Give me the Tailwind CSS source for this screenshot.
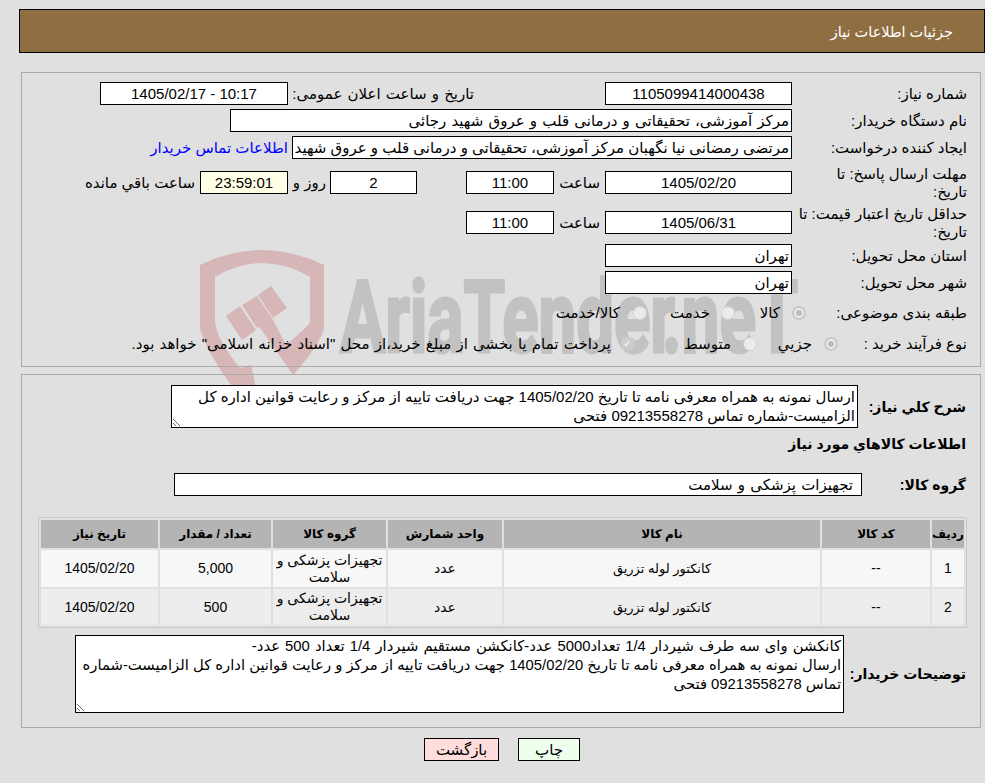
<!DOCTYPE html>
<html lang="fa" dir="rtl">
<head>
  <meta charset="UTF-8" />
  <title>جزئیات اطلاعات نیاز</title>
  <script src="https://cdn.jsdelivr.net/npm/@tailwindcss/browser@4"></script>
</head>
<body class="relative h-[783px] overflow-hidden bg-[#e0e0e0] text-[15px] leading-[18px] text-black font-['Liberation_Sans','DejaVu_Sans',sans-serif]">

  <!-- watermark -->
  <svg class="absolute left-0 top-0 [direction:ltr]" width="985" height="783" viewBox="0 0 985 783">
    <path d="M200 265 Q262 235 324 265 V328 Q320 345 293 375 L258 325 L272 318 L286 345 Q310 325 310 322 V277 Q262 249 215 277 V322 Q217 340 240 368 L251 365 L257 392 L236 392 Q205 350 200 328 Z" fill="#d6b6b6"/>
    <path d="M226 316 L240 306 L256 330 L242 340Z M242 305 L257 296 L272 318 L257 328Z M258 295 L271 286 L287 308 L273 318Z" fill="#d6b6b6"/>
    <g font-family="Roboto" font-weight="700" font-size="100" fill="#c2c2c2" stroke="#c2c2c2" stroke-width="3">
      <text x="340" y="352" textLength="335" lengthAdjust="spacingAndGlyphs">AriaTender</text>
      <text x="662" y="352" textLength="136" lengthAdjust="spacingAndGlyphs">.neT</text>
    </g>
  </svg>

  <div class="relative pl-[19px] pt-[9px]">
    <!-- header -->
    <div class="flex h-[44px] items-center border border-black bg-[#8f6f42] pr-[31px] pt-[2px] text-[14.5px] text-white">جزئیات اطلاعات نیاز</div>

    <!-- main details -->
    <div class="ml-[2px] mr-[4px] mt-[19px] h-[295px] border border-[#aaaaaa] pr-[13px] pt-[9px]">
      <div class="flex h-[23px] items-center">
        <div class="w-[175px] shrink-0 pl-[6px]">شماره نیاز:</div>
        <div class="flex h-[23px] w-[187px] items-center justify-center border border-black bg-white">1105099414000438</div>
        <div class="w-[317px] pr-[131px] whitespace-nowrap [word-spacing:1px]">تاریخ و ساعت اعلان عمومی:</div>
        <div class="flex h-[23px] w-[188px] items-center justify-center border border-black bg-white" dir="ltr">1405/02/17 - 10:17</div>
      </div>
      <div class="mt-[4px] flex h-[23px] items-center">
        <div class="w-[175px] shrink-0 pl-[6px]">نام دستگاه خریدار:</div>
        <div class="flex h-[23px] w-[562px] items-center border border-black bg-white px-[2px] [word-spacing:1px]">مرکز آموزشی، تحقیقاتی و درمانی قلب و عروق شهید رجائی</div>
      </div>
      <div class="mt-[4px] flex h-[23px] items-center">
        <div class="w-[175px] shrink-0 pl-[6px]">ایجاد کننده درخواست:</div>
        <div class="flex h-[23px] w-[500px] items-center overflow-hidden whitespace-nowrap border border-black bg-white px-[2px]">مرتضی رمضانی نیا نگهبان مرکز آموزشی، تحقیقاتی و درمانی قلب و عروق شهید رجائی</div>
        <a class="mr-[4px] whitespace-nowrap text-[#0000ff]">اطلاعات تماس خریدار</a>
      </div>
      <div class="mt-[6px] flex h-[35px] items-center">
        <div class="w-[175px] shrink-0">مهلت ارسال پاسخ: تا<br />تاریخ:</div>
        <div class="flex h-[23px] w-[187px] items-center justify-center border border-black bg-white">1405/02/20</div>
        <div class="w-[51px] pr-[5px]">ساعت</div>
        <div class="flex h-[23px] w-[88px] items-center justify-center border border-black bg-white">11:00</div>
        <div class="w-[49px]"></div>
        <div class="flex h-[23px] w-[87px] items-center justify-center border border-black bg-white">2</div>
        <div class="w-[42px] pr-[4px] whitespace-nowrap">روز و</div>
        <div class="flex h-[23px] w-[88px] items-center justify-center border border-black bg-[#ffffe6]">23:59:01</div>
        <div class="pr-[5px] whitespace-nowrap">ساعت باقي مانده</div>
      </div>
      <div class="mt-[5px] flex h-[35px] items-center">
        <div class="w-[175px] shrink-0">حداقل تاریخ اعتبار قیمت: تا<br />تاریخ:</div>
        <div class="flex h-[23px] w-[187px] items-center justify-center border border-black bg-white">1405/06/31</div>
        <div class="w-[51px] pr-[5px]">ساعت</div>
        <div class="flex h-[23px] w-[88px] items-center justify-center border border-black bg-white">11:00</div>
      </div>
      <div class="mt-[4px] flex h-[23px] items-center">
        <div class="w-[175px] shrink-0 pl-[6px]">استان محل تحویل:</div>
        <div class="flex h-[23px] w-[187px] items-center border border-black bg-white px-[2px]">تهران</div>
      </div>
      <div class="mt-[4px] flex h-[23px] items-center">
        <div class="w-[175px] shrink-0 pl-[6px]">شهر محل تحویل:</div>
        <div class="flex h-[23px] w-[187px] items-center border border-black bg-white px-[2px]">تهران</div>
      </div>
      <div class="mt-[7px] flex h-[23px] items-center">
        <div class="w-[161px] shrink-0">طبقه بندی موضوعی:</div>
        <span class="h-[14px] w-[14px] rounded-full border-2 border-[#c8c8c8] bg-[#ececec] p-[2px]"><span class="block h-full w-full rounded-full bg-[#bdbdbd]"></span></span>
        <div class="w-[57px] pr-[12px]">کالا</div>
        <span class="h-[14px] w-[14px] rounded-full border border-[#d0d0d0] bg-[#f0f0f0]/90"></span>
        <div class="w-[74px] pr-[11px]">خدمت</div>
        <span class="h-[14px] w-[14px] rounded-full border border-[#d0d0d0] bg-[#f0f0f0]/90"></span>
        <div class="pr-[13px] whitespace-nowrap">کالا/خدمت</div>
      </div>
      <div class="mt-[8px] flex h-[23px] items-center">
        <div class="w-[129px] shrink-0">نوع فرآیند خرید :</div>
        <span class="h-[14px] w-[14px] rounded-full border-2 border-[#c8c8c8] bg-[#ececec] p-[2px]"><span class="block h-full w-full rounded-full bg-[#bdbdbd]"></span></span>
        <div class="w-[67px] pr-[12px]">جزيي</div>
        <span class="h-[14px] w-[14px] rounded-full border border-[#d0d0d0] bg-[#f0f0f0]/90"></span>
        <div class="w-[109px] pr-[12px]">متوسط</div>
        <span class="flex h-[13px] w-[13px] items-center justify-center rounded-[2px] border border-[#cccccc] bg-[#d0d0d0]/80 text-[10px] leading-none text-white">✓</span>
        <div class="pr-[10px] whitespace-nowrap [word-spacing:1px]">پرداخت تمام یا بخشی از مبلغ خرید،از محل "اسناد خزانه اسلامی" خواهد بود.</div>
      </div>
    </div>

    <!-- goods -->
    <div class="ml-[2px] mr-[4px] mt-[7px] h-[354px] border border-[#aaaaaa] pr-[14px] pt-[10px]">
      <div class="flex h-[43px] items-center">
        <div class="w-[108px] shrink-0 text-[14px] font-bold">شرح کلي نیاز:</div>
        <div class="relative h-[43px] w-[687px] border border-black bg-white px-[2px] pt-px leading-[19px]">
          ارسال نمونه به همراه معرفی نامه تا تاریخ 1405/02/20 جهت دریافت تاییه از مرکز و رعایت قوانین اداره کل الزامیست-شماره تماس 09213558278 فتحی
          <svg class="absolute bottom-0 left-0" width="10" height="10" viewBox="0 0 10 10"><path d="M1 2 L8 9 M1 6 L4 9" stroke="#666666" stroke-width="1" fill="none"/></svg>
        </div>
      </div>
      <div class="mt-[7px] text-[14px] font-bold">اطلاعات کالاهاي مورد نیاز</div>
      <div class="mt-[20px] flex h-[23px] items-center">
        <div class="w-[104px] shrink-0 text-[14px] font-bold">گروه کالا:</div>
        <div class="flex h-[23px] w-[688px] items-center border border-black bg-white pl-[2px] pr-[8px] [word-spacing:1px]">تجهیزات پزشکی و سلامت</div>
      </div>

      <table class="-mr-px mt-[21px] w-[927px] table-fixed border-separate border-spacing-[2px] border border-[#c8c8c8] text-center text-[14px] leading-[17px]">
        <colgroup>
          <col class="w-[32px]" /><col class="w-[108px]" /><col class="w-[316px]" /><col class="w-[114px]" /><col class="w-[113px]" /><col class="w-[111px]" /><col class="w-[117px]" />
        </colgroup>
        <thead>
          <tr class="h-[28px] bg-[#b4b4b4] text-[12px] font-bold">
            <th>ردیف</th><th>کد کالا</th><th>نام کالا</th><th>واحد شمارش</th><th>گروه کالا</th><th>تعداد / مقدار</th><th>تاریخ نیاز</th>
          </tr>
        </thead>
        <tbody>
          <tr class="h-[37px] bg-[#f7f7f7]">
            <td>1</td><td>--</td><td class="text-[13px]">کانکتور لوله تزریق</td><td>عدد</td><td>تجهیزات پزشکی و سلامت</td><td>5,000</td><td>1405/02/20</td>
          </tr>
          <tr class="h-[36px] bg-[#ededed]">
            <td>2</td><td>--</td><td class="text-[13px]">کانکتور لوله تزریق</td><td>عدد</td><td>تجهیزات پزشکی و سلامت</td><td>500</td><td>1405/02/20</td>
          </tr>
        </tbody>
      </table>

      <div class="mt-[7px] flex h-[78px] items-center">
        <div class="w-[122px] shrink-0 text-[14px] font-bold">توضیحات خریدار:</div>
        <div class="relative h-[78px] w-[769px] border border-black bg-white px-[2px] pt-px text-[14.8px] leading-[19px]">
          <p class="[word-spacing:1px]">کانکشن وای سه طرف شیردار 1/4 تعداد5000 عدد-کانکشن مستقیم شیردار 1/4 تعداد 500 عدد-</p>
          <p>ارسال نمونه به همراه معرفی نامه تا تاریخ 1405/02/20 جهت دریافت تاییه از مرکز و رعایت قوانین اداره کل الزامیست-شماره تماس 09213558278 فتحی</p>
          <svg class="absolute bottom-0 left-0" width="10" height="10" viewBox="0 0 10 10"><path d="M1 2 L8 9 M1 6 L4 9" stroke="#666666" stroke-width="1" fill="none"/></svg>
        </div>
      </div>
    </div>

    <!-- buttons -->
    <div class="mt-[10px] flex h-[23px] justify-center gap-[19px]" dir="ltr">
      <button class="h-[23px] w-[75px] border border-black bg-[#ffdddd]">بازگشت</button>
      <button class="h-[23px] w-[62px] border border-black bg-[#eeffee]">چاپ</button>
    </div>
  </div>
</body>
</html>
